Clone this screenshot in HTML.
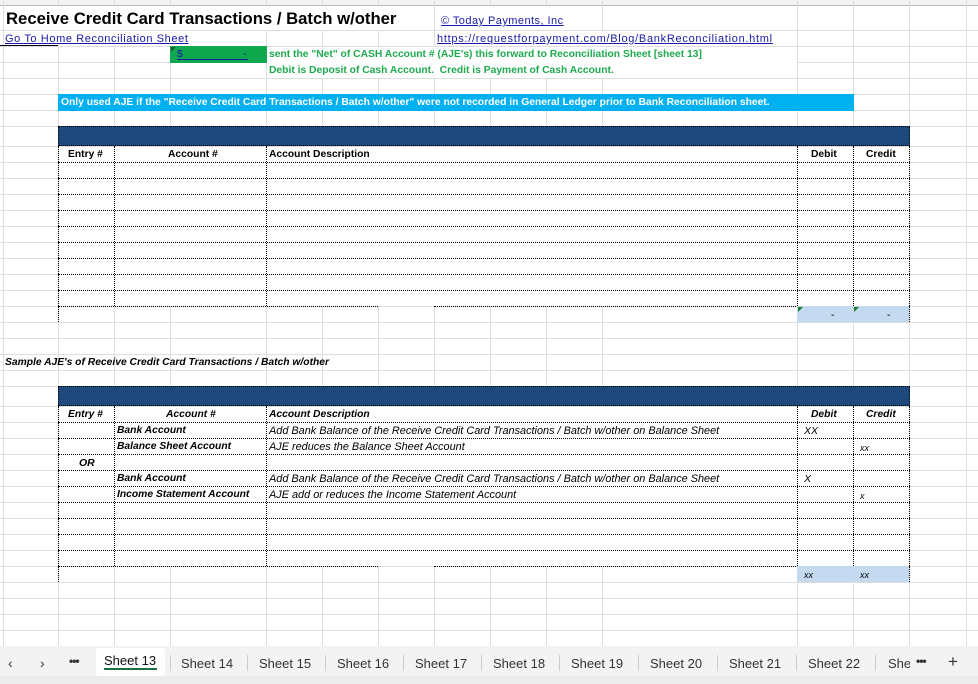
<!DOCTYPE html>
<html><head><meta charset="utf-8"><style>
*{margin:0;padding:0;box-sizing:border-box}
body{width:978px;height:684px;overflow:hidden;background:#fff;position:relative;font-family:"Liberation Sans",sans-serif}
.a{position:absolute}
.v{position:absolute;top:0;width:1px;height:646px;background:#dedede}
.h{position:absolute;left:0;width:978px;height:1px;background:#dedede}
.t{position:absolute;font-size:10.5px;white-space:nowrap;line-height:16px}
.b{font-weight:bold}
.i{font-style:italic}
.dh{position:absolute;height:0;border-top:1px dotted #000}
.dv{position:absolute;width:0;border-left:1px dotted #000}
.lk{color:#1a1aa6;text-decoration:underline;font-size:11px}
.g{color:#1faa4f;font-weight:bold}
.tab{position:absolute;top:656px;font-size:13px;color:#333}
.sep{position:absolute;top:655px;width:1px;height:16px;background:#ccc}
</style></head><body>
<div class="a" style="left:0;top:0;width:978px;height:6px;background:#f3f3f3;border-bottom:1px solid #bbb"></div>
<div class="v" style="left:3px"></div><div class="v" style="left:58px"></div><div class="v" style="left:114px"></div><div class="v" style="left:170px"></div><div class="v" style="left:266px"></div><div class="v" style="left:322px"></div><div class="v" style="left:378px"></div><div class="v" style="left:434px"></div><div class="v" style="left:490px"></div><div class="v" style="left:546px"></div><div class="v" style="left:602px"></div><div class="v" style="left:797px"></div><div class="v" style="left:853px"></div><div class="v" style="left:909px"></div><div class="v" style="left:966px"></div>
<div class="h" style="top:30px"></div><div class="h" style="top:46px"></div><div class="h" style="top:62px"></div><div class="h" style="top:78px"></div><div class="h" style="top:94px"></div><div class="h" style="top:110px"></div><div class="h" style="top:126px"></div><div class="h" style="top:146px"></div><div class="h" style="top:162px"></div><div class="h" style="top:178px"></div><div class="h" style="top:194px"></div><div class="h" style="top:210px"></div><div class="h" style="top:226px"></div><div class="h" style="top:242px"></div><div class="h" style="top:258px"></div><div class="h" style="top:274px"></div><div class="h" style="top:290px"></div><div class="h" style="top:306px"></div><div class="h" style="top:322px"></div><div class="h" style="top:338px"></div><div class="h" style="top:354px"></div><div class="h" style="top:370px"></div><div class="h" style="top:386px"></div><div class="h" style="top:406px"></div><div class="h" style="top:422px"></div><div class="h" style="top:438px"></div><div class="h" style="top:454px"></div><div class="h" style="top:470px"></div><div class="h" style="top:486px"></div><div class="h" style="top:502px"></div><div class="h" style="top:518px"></div><div class="h" style="top:534px"></div><div class="h" style="top:550px"></div><div class="h" style="top:566px"></div><div class="h" style="top:582px"></div><div class="h" style="top:598px"></div><div class="h" style="top:614px"></div><div class="h" style="top:630px"></div>
<div class="a" style="left:4px;top:7px;width:430px;height:23px;background:#fff"></div>
<div class="a" style="left:435px;top:7px;width:167px;height:23px;background:#fff"></div>
<div class="a" style="left:4px;top:31px;width:262px;height:15px;background:#fff"></div>
<div class="a" style="left:435px;top:31px;width:362px;height:15px;background:#fff"></div>
<div class="a" style="left:267px;top:47px;width:530px;height:31px;background:#fff"></div>
<div class="t b" style="left:6px;top:8px;font-size:16.7px;line-height:22px">Receive Credit Card Transactions / Batch w/other</div>
<div class="t lk" style="left:441px;top:13px;letter-spacing:0.45px">© Today Payments, Inc</div>
<div class="t lk" style="left:5px;top:31px;letter-spacing:0.6px">Go To Home Reconciliation Sheet</div>
<div class="a" style="left:0;top:45px;width:58px;height:1px;background:#000"></div>
<div class="t lk" style="left:437px;top:31px;letter-spacing:0.72px">https://requestforpayment.com/Blog/BankReconciliation.html</div>
<div class="a" style="left:170px;top:46px;width:97px;height:17px;background:#0fa84e"></div>
<div class="a" style="left:171px;top:47px;width:0;height:0;border-top:5px solid #1d5e2a;border-right:5px solid transparent"></div>
<div class="t" style="left:177px;top:46px;color:#1a1aa6">$</div>
<div class="a" style="left:177px;top:59px;width:71px;height:1px;background:#1a1aa6"></div>
<div class="t" style="left:243px;top:46px;color:#1a1aa6">-</div>
<div class="t g" style="left:269px;top:47px;font-size:10.3px">sent the "Net" of CASH Account # (AJE's) this forward to Reconciliation Sheet [sheet 13]</div>
<div class="t g" style="left:269px;top:63px;font-size:10.3px">Debit is Deposit of Cash Account.&nbsp; Credit is Payment of Cash Account.</div>
<div class="a" style="left:58px;top:94px;width:796px;height:17px;background:#00b0f0"></div>
<div class="t b" style="left:61px;top:95px;color:#fff;font-size:10.3px">Only used AJE if the "Receive Credit Card Transactions / Batch w/other" were not recorded in General Ledger prior to Bank Reconciliation sheet.</div>

<div class="a" style="left:58px;top:126px;width:852px;height:20px;background:#1f497d;border:1px dotted #000"></div>
<div class="a" style="left:59px;top:147px;width:850px;height:159px;background:#fff"></div>
<div class="dv" style="left:58px;top:146px;height:176px"></div>
<div class="dv" style="left:114px;top:146px;height:160px"></div>
<div class="dv" style="left:266px;top:146px;height:160px"></div>
<div class="dv" style="left:797px;top:146px;height:160px"></div>
<div class="dv" style="left:853px;top:146px;height:160px"></div>
<div class="dv" style="left:909px;top:146px;height:176px"></div>
<div class="dh" style="left:58px;top:162px;width:852px"></div><div class="dh" style="left:58px;top:178px;width:852px"></div><div class="dh" style="left:58px;top:194px;width:852px"></div><div class="dh" style="left:58px;top:210px;width:852px"></div><div class="dh" style="left:58px;top:226px;width:852px"></div><div class="dh" style="left:58px;top:242px;width:852px"></div><div class="dh" style="left:58px;top:258px;width:852px"></div><div class="dh" style="left:58px;top:274px;width:852px"></div><div class="dh" style="left:58px;top:290px;width:852px"></div>
<div class="dh" style="left:58px;top:306px;width:320px"></div><div class="dh" style="left:434px;top:306px;width:476px"></div>
<div class="t b" style="left:68px;top:147px;font-size:10.3px">Entry #</div>
<div class="t b" style="left:168px;top:147px;font-size:10.3px">Account #</div>
<div class="t b" style="left:269px;top:147px;font-size:10.3px">Account Description</div>
<div class="t b" style="left:811px;top:147px;font-size:10.3px">Debit</div>
<div class="t b" style="left:866px;top:147px;font-size:10.3px">Credit</div>
<div class="a" style="left:797px;top:306px;width:112px;height:16px;background:#c5d9f1"></div>
<div class="a" style="left:798px;top:307px;border-top:5px solid #1a7a2a;border-right:5px solid transparent"></div>
<div class="a" style="left:854px;top:307px;border-top:5px solid #1a7a2a;border-right:5px solid transparent"></div>
<div class="t" style="left:831px;top:307px">-</div>
<div class="t" style="left:887px;top:307px">-</div>

<div class="t b i" style="left:5px;top:355px;font-size:10.3px">Sample AJE's of Receive Credit Card Transactions / Batch w/other</div>

<div class="a" style="left:58px;top:386px;width:852px;height:20px;background:#1f497d;border:1px dotted #000"></div>
<div class="a" style="left:59px;top:407px;width:850px;height:159px;background:#fff"></div>
<div class="dv" style="left:58px;top:406px;height:176px"></div>
<div class="dv" style="left:114px;top:406px;height:160px"></div>
<div class="dv" style="left:266px;top:406px;height:160px"></div>
<div class="dv" style="left:797px;top:406px;height:160px"></div>
<div class="dv" style="left:853px;top:406px;height:160px"></div>
<div class="dv" style="left:909px;top:406px;height:176px"></div>
<div class="dh" style="left:58px;top:422px;width:852px"></div><div class="dh" style="left:58px;top:438px;width:852px"></div><div class="dh" style="left:58px;top:454px;width:852px"></div><div class="dh" style="left:58px;top:470px;width:852px"></div><div class="dh" style="left:58px;top:486px;width:852px"></div><div class="dh" style="left:58px;top:502px;width:852px"></div><div class="dh" style="left:58px;top:518px;width:852px"></div><div class="dh" style="left:58px;top:534px;width:852px"></div><div class="dh" style="left:58px;top:550px;width:852px"></div>
<div class="dh" style="left:58px;top:566px;width:320px"></div><div class="dh" style="left:434px;top:566px;width:476px"></div>
<div class="t b i" style="left:68px;top:407px;font-size:10.3px">Entry #</div>
<div class="t b i" style="left:166px;top:407px;font-size:10.3px">Account #</div>
<div class="t b i" style="left:269px;top:407px;font-size:10.3px">Account Description</div>
<div class="t b i" style="left:811px;top:407px;font-size:10.3px">Debit</div>
<div class="t b i" style="left:866px;top:407px;font-size:10.3px">Credit</div>
<div class="t b i" style="left:117px;top:423px;font-size:10.3px">Bank Account</div>
<div class="t i" style="left:269px;top:423px;font-size:10.9px">Add Bank Balance of the Receive Credit Card Transactions / Batch w/other on Balance Sheet</div>
<div class="t i" style="left:804px;top:423px;font-size:10.5px">XX</div>
<div class="t b i" style="left:117px;top:439px;font-size:10.3px">Balance Sheet Account</div>
<div class="t i" style="left:269px;top:439px;font-size:10.9px">AJE reduces the Balance Sheet Account</div>
<div class="t i" style="left:860px;top:440px;font-size:9px">xx</div>
<div class="t b i" style="left:79px;top:455px;font-size:10.5px">OR</div>
<div class="t b i" style="left:117px;top:471px;font-size:10.3px">Bank Account</div>
<div class="t i" style="left:269px;top:471px;font-size:10.9px">Add Bank Balance of the Receive Credit Card Transactions / Batch w/other on Balance Sheet</div>
<div class="t i" style="left:804px;top:471px;font-size:10.5px">X</div>
<div class="t b i" style="left:117px;top:487px;font-size:10.3px">Income Statement Account</div>
<div class="t i" style="left:269px;top:487px;font-size:10.9px">AJE add or reduces the Income Statement Account</div>
<div class="t i" style="left:860px;top:488px;font-size:9px">x</div>
<div class="a" style="left:797px;top:566px;width:112px;height:16px;background:#c5d9f1"></div>
<div class="t i" style="left:804px;top:567px;font-size:9px">xx</div>
<div class="t i" style="left:860px;top:567px;font-size:9px">xx</div>

<div class="a" style="left:0;top:646px;width:978px;height:38px;background:#f3f3f3"></div>
<div class="a" style="left:0;top:676px;width:978px;height:8px;background:#ececec"></div>
<div class="a" style="left:96px;top:648px;width:69px;height:28px;background:#fff;border-radius:3px"></div>
<div class="a" style="left:104px;top:668px;width:53px;height:2px;background:#1e6e43"></div>
<div class="tab" style="left:8px;top:655px;font-size:14px">&lsaquo;</div>
<div class="tab" style="left:40px;top:655px;font-size:14px">&rsaquo;</div>
<div class="tab" style="left:69px;top:654px;font-size:12px;font-weight:bold;letter-spacing:-1px">&bull;&bull;&bull;</div>
<div class="tab" style="left:104px;top:653px;color:#111">Sheet 13</div>
<div class="sep" style="left:170px"></div>
<div class="tab" style="left:181px">Sheet 14</div><div class="sep" style="left:247px"></div>
<div class="tab" style="left:259px">Sheet 15</div><div class="sep" style="left:325px"></div>
<div class="tab" style="left:337px">Sheet 16</div><div class="sep" style="left:403px"></div>
<div class="tab" style="left:415px">Sheet 17</div><div class="sep" style="left:481px"></div>
<div class="tab" style="left:493px">Sheet 18</div><div class="sep" style="left:559px"></div>
<div class="tab" style="left:571px">Sheet 19</div><div class="sep" style="left:638px"></div>
<div class="tab" style="left:650px">Sheet 20</div><div class="sep" style="left:717px"></div>
<div class="tab" style="left:729px">Sheet 21</div><div class="sep" style="left:796px"></div>
<div class="tab" style="left:808px">Sheet 22</div><div class="sep" style="left:875px"></div>
<div class="tab" style="left:888px;width:22px;overflow:hidden">Sheet</div>
<div class="tab" style="left:916px;top:654px;font-size:12px;font-weight:bold;letter-spacing:-1px">&bull;&bull;&bull;</div>
<div class="tab" style="left:948px;top:652px;font-size:17px">+</div>
</body></html>
